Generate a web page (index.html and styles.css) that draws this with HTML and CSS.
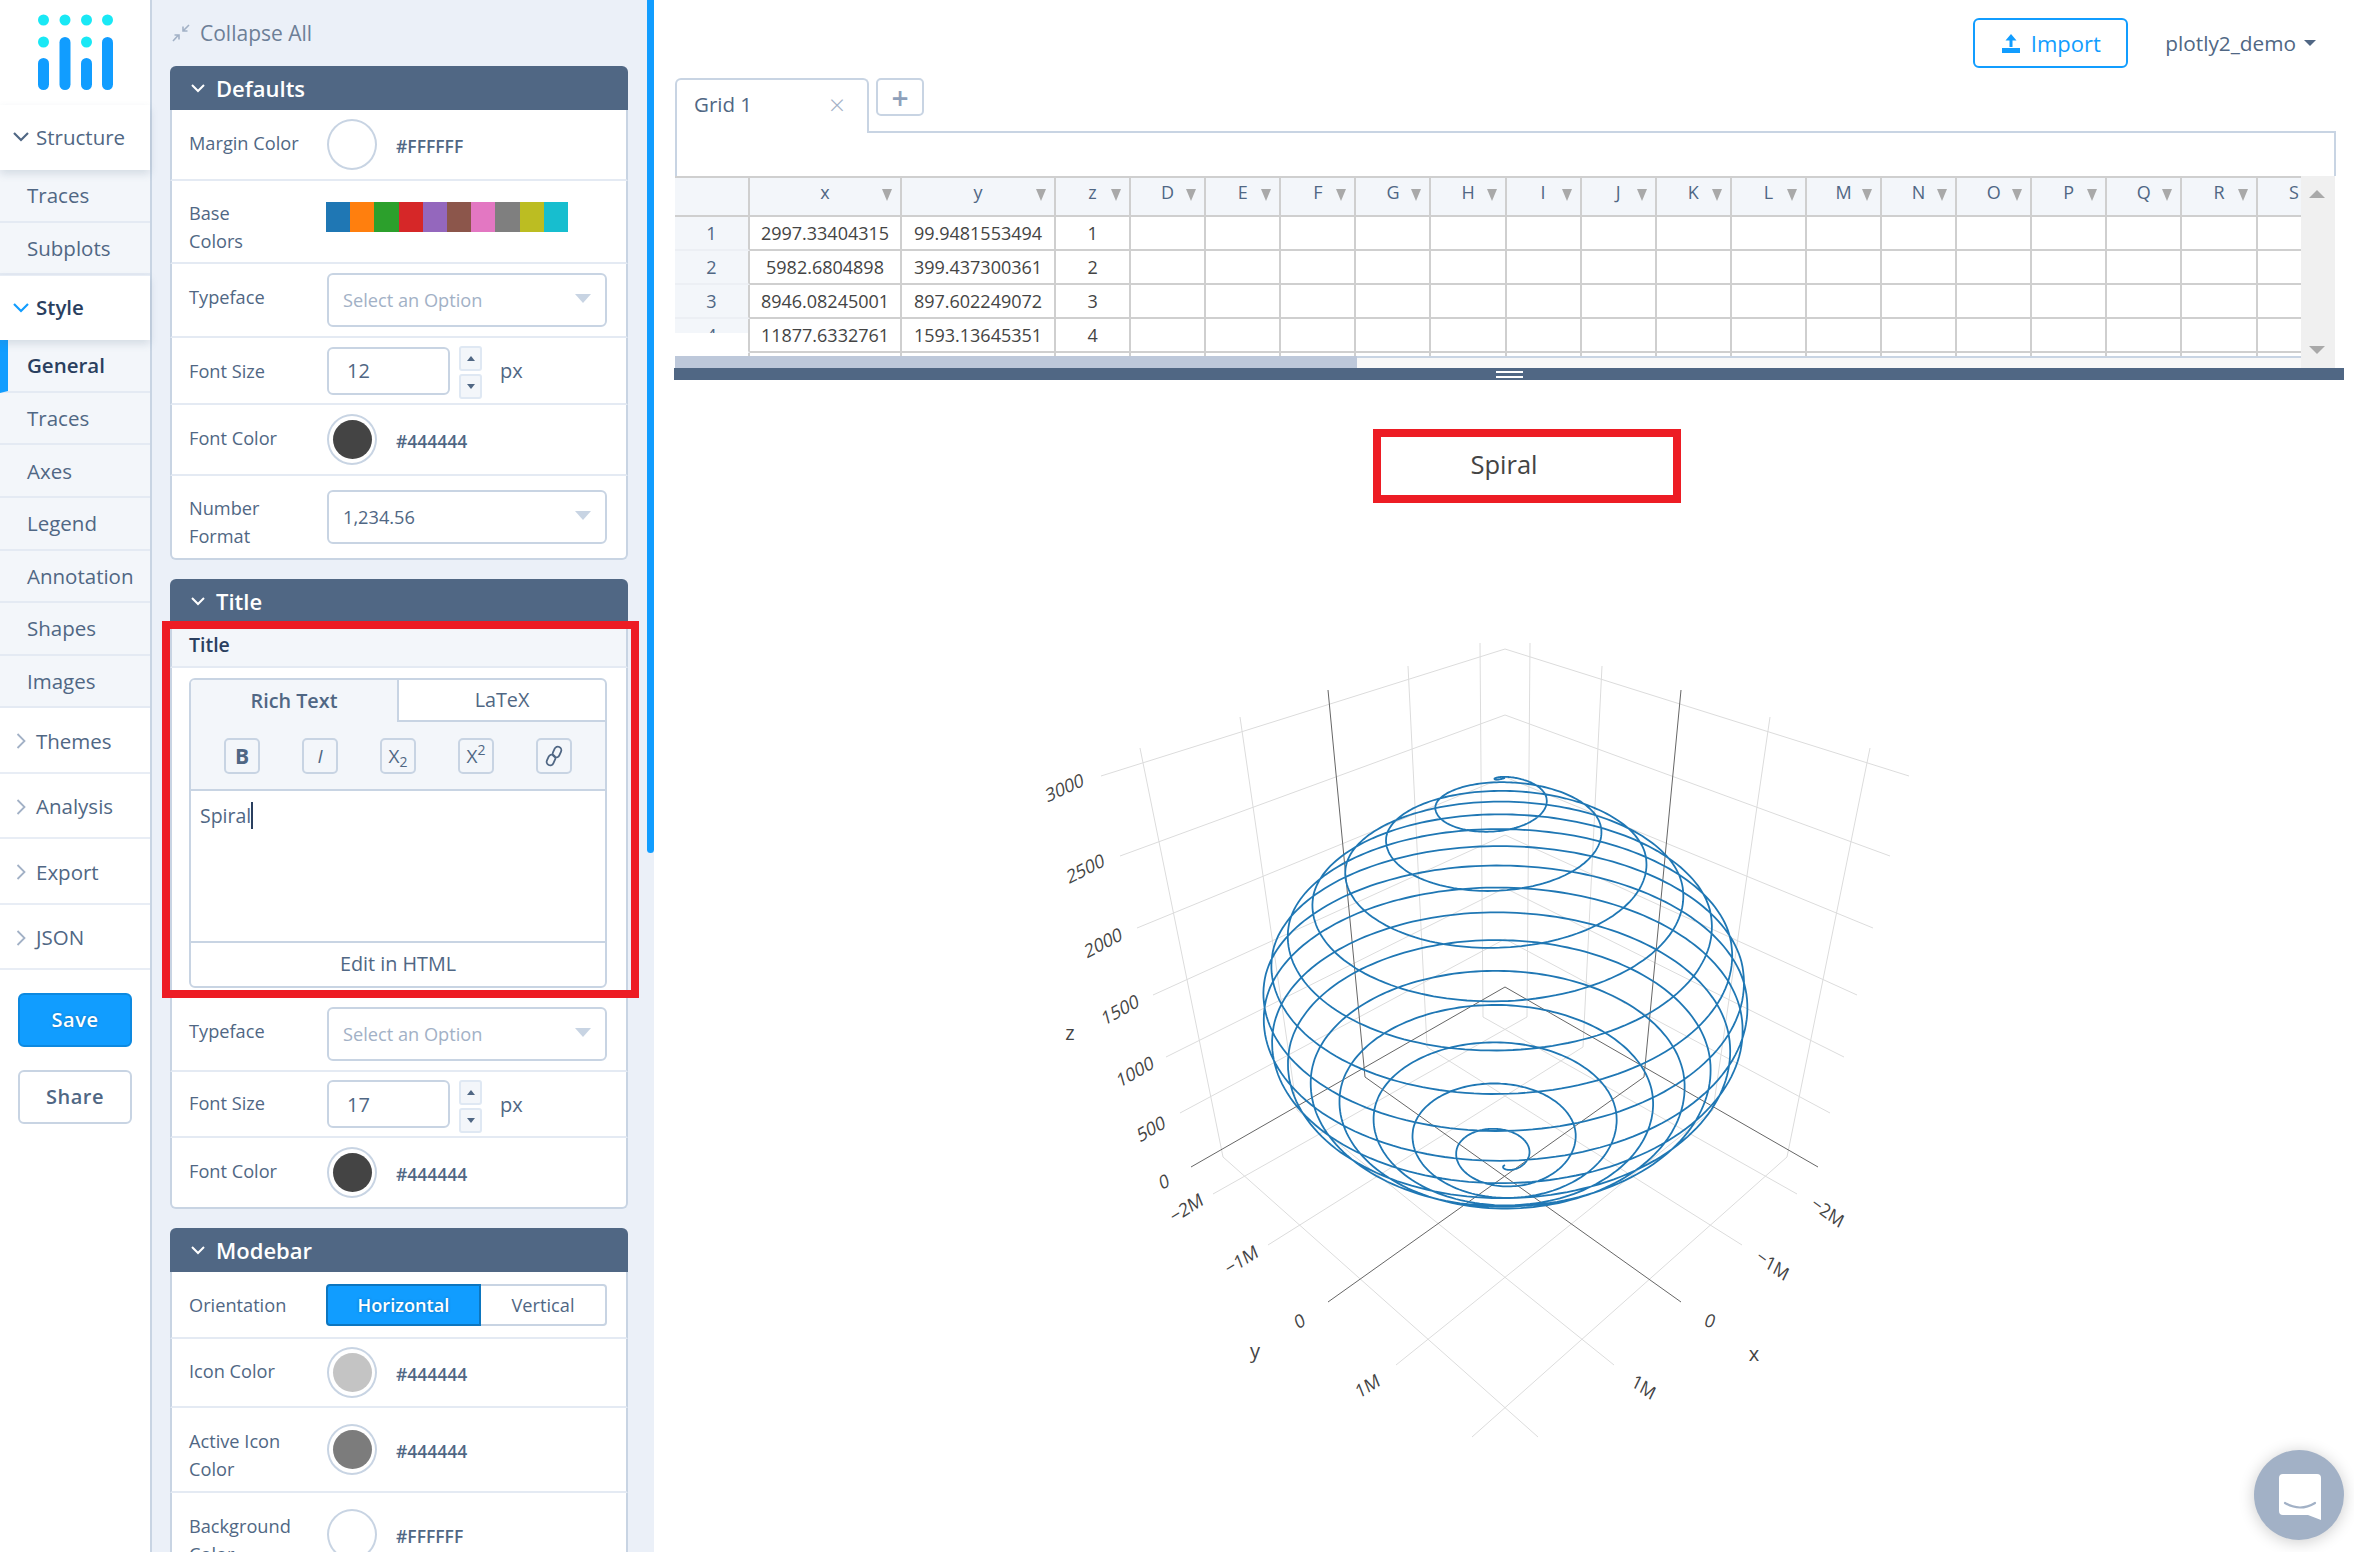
FILE: index.html
```html
<!DOCTYPE html>
<html lang="en">
<head>
    <meta charset="UTF-8">
    <title>Chart Studio</title>
    <link rel="stylesheet" href="styles.css">
</head>
<body>

    <div class="sidebar">
        <div class="logo">
            <svg width="150" height="105" viewBox="0 0 150 105">
                <g fill="#19e8f5">
                    <circle cx="43.5" cy="20" r="5.5"/><circle cx="65" cy="20" r="5.5"/><circle cx="86.5" cy="20" r="5.5"/><circle cx="107.5" cy="20" r="5.5"/>
                    <circle cx="43.5" cy="42" r="5.5"/><circle cx="86.5" cy="42" r="5.5"/>
                </g>
                <g fill="#119dff">
                    <rect x="38" y="58" width="11" height="32" rx="5.5"/><rect x="59.5" y="37" width="11" height="53" rx="5.5"/>
                    <rect x="81" y="58" width="11" height="32" rx="5.5"/><rect x="102" y="37" width="11" height="53" rx="5.5"/>
                </g>
            </svg>
        </div>
        <div class="nav-group open">
            <svg class="chev" viewBox="0 0 16 10"><path d="M1 1l7 7 7-7" fill="none" stroke="#506784" stroke-width="2.2"/></svg>Structure
        </div>
        <div class="nav-item">Traces</div>
        <div class="nav-item">Subplots</div>
        <div class="nav-group open active">
            <svg class="chev" viewBox="0 0 16 10"><path d="M1 1l7 7 7-7" fill="none" stroke="#119dff" stroke-width="2.2"/></svg>Style
        </div>
        <div class="nav-item current">General</div>
        <div class="nav-item">Traces</div>
        <div class="nav-item">Axes</div>
        <div class="nav-item">Legend</div>
        <div class="nav-item">Annotation</div>
        <div class="nav-item">Shapes</div>
        <div class="nav-item">Images</div>
        <div class="nav-group">
            <svg class="chev-r" viewBox="0 0 10 16"><path d="M1.5 1l7 7-7 7" fill="none" stroke="#a2b1c6" stroke-width="1.8"/></svg>Themes
        </div>
        <div class="nav-group">
            <svg class="chev-r" viewBox="0 0 10 16"><path d="M1.5 1l7 7-7 7" fill="none" stroke="#a2b1c6" stroke-width="1.8"/></svg>Analysis
        </div>
        <div class="nav-group">
            <svg class="chev-r" viewBox="0 0 10 16"><path d="M1.5 1l7 7-7 7" fill="none" stroke="#a2b1c6" stroke-width="1.8"/></svg>Export
        </div>
        <div class="nav-group">
            <svg class="chev-r" viewBox="0 0 10 16"><path d="M1.5 1l7 7-7 7" fill="none" stroke="#a2b1c6" stroke-width="1.8"/></svg>JSON
        </div>
        <div class="side-btn save">Save</div>
        <div class="side-btn share">Share</div>
    </div>

    <div class="panels">
        <div class="panel-scroll"></div>
        <div class="collapse-all">
            <svg width="18" height="18" viewBox="0 0 18 18"><g fill="none" stroke="#a2b1c6" stroke-width="1.6"><path d="M17 1l-6 6M11 2.5V7h4.5"/><path d="M1 17l5.5-6M7 15.5V11H2.5"/></g></svg>
            Collapse All
        </div>

        <div class="panel">
            <div class="panel-head">
                <svg class="head-chev" viewBox="0 0 14 9"><path d="M1 1l6 6 6-6" fill="none" stroke="#fff" stroke-width="2"/></svg>Defaults
            </div>
            <div class="row h71">
                <div class="label">Margin Color</div>
                <div class="swatch white"></div><div class="hex">#FFFFFF</div>
            </div>
            <div class="row h83">
                <div class="label low">Base<br>Colors</div>
                <div class="palette">
                    <span class="c1"></span><span class="c2"></span><span class="c3"></span><span class="c4"></span><span class="c5"></span>
                    <span class="c6"></span><span class="c7"></span><span class="c8"></span><span class="c9"></span><span class="c10"></span>
                </div>
            </div>
            <div class="row h74">
                <div class="label">Typeface</div>
                <div class="select placeholder">Select an Option</div>
            </div>
            <div class="row h67">
                <div class="label">Font Size</div>
                <div class="number">12</div>
                <div class="spinner"><span class="up"></span><span class="down"></span></div>
                <div class="unit">px</div>
            </div>
            <div class="row h71">
                <div class="label">Font Color</div>
                <div class="swatch"><i class="dot-dark"></i></div><div class="hex">#444444</div>
            </div>
            <div class="row h82 last">
                <div class="label low">Number<br>Format</div>
                <div class="select">1,234.56</div>
            </div>
        </div>

        <div class="panel">
            <div class="panel-head">
                <svg class="head-chev" viewBox="0 0 14 9"><path d="M1 1l6 6 6-6" fill="none" stroke="#fff" stroke-width="2"/></svg>Title
            </div>
            <div class="sub-head">Title</div>
            <div class="editor-row">
                <div class="editor">
                    <div class="editor-tabs">
                        <div class="editor-tab selected">Rich Text</div>
                        <div class="editor-tab">LaTeX</div>
                    </div>
                    <div class="toolbar">
                        <div class="tool bold">B</div>
                        <div class="tool italic">I</div>
                        <div class="tool">X<sub>2</sub></div>
                        <div class="tool">X<sup>2</sup></div>
                        <div class="tool">
                            <svg width="20" height="22" viewBox="0 0 20 22"><g fill="none" stroke="#506784" stroke-width="1.8"><rect x="9.5" y="1.5" width="7" height="11" rx="3.5" transform="rotate(25 13 7)"/><rect x="3.5" y="9.5" width="7" height="11" rx="3.5" transform="rotate(25 7 15)"/></g></svg>
                        </div>
                    </div>
                    <div class="editor-text"><span class="typed">Spiral</span></div>
                    <div class="editor-foot">Edit in HTML</div>
                </div>
            </div>
            <div class="row h74">
                <div class="label">Typeface</div>
                <div class="select placeholder">Select an Option</div>
            </div>
            <div class="row h66">
                <div class="label">Font Size</div>
                <div class="number">17</div>
                <div class="spinner"><span class="up"></span><span class="down"></span></div>
                <div class="unit">px</div>
            </div>
            <div class="row h71 last">
                <div class="label">Font Color</div>
                <div class="swatch"><i class="dot-dark"></i></div><div class="hex">#444444</div>
            </div>
            <div class="red-box title-mark"></div>
        </div>

        <div class="panel">
            <div class="panel-head">
                <svg class="head-chev" viewBox="0 0 14 9"><path d="M1 1l6 6 6-6" fill="none" stroke="#fff" stroke-width="2"/></svg>Modebar
            </div>
            <div class="row h67">
                <div class="label">Orientation</div>
                <div class="toggle">
                    <div class="toggle-on">Horizontal</div>
                    <div class="toggle-off">Vertical</div>
                </div>
            </div>
            <div class="row h69">
                <div class="label">Icon Color</div>
                <div class="swatch"><i class="dot-light"></i></div><div class="hex">#444444</div>
            </div>
            <div class="row h85">
                <div class="label low">Active Icon<br>Color</div>
                <div class="swatch"><i class="dot-mid"></i></div><div class="hex">#444444</div>
            </div>
            <div class="row h85">
                <div class="label low">Background<br>Color</div>
                <div class="swatch white"></div><div class="hex">#FFFFFF</div>
            </div>
        </div>
    </div>

    <div class="main">
        <div class="topbar">
            <div class="import-btn">
                <svg width="20" height="20" viewBox="0 0 20 20"><path d="M10 1L4.5 7.5h4V14h3V7.5h4zM1 15h18v5H1z" fill="#119dff"/></svg>
                Import
            </div>
            <div class="user">plotly2_demo<span class="user-caret"></span></div>
        </div>

        <div class="grid-wrap">
            <div class="grid-tabs">
                <div class="grid-tab">Grid 1<span class="tab-close">&times;</span></div>
                <div class="grid-add">+</div>
            </div>
            <div class="formula"></div>
            <div class="sheet">
                <div class="sheet-view">
                    <table class="cells">
                        <colgroup><col class="c-head"><col class="c-x"><col class="c-y"><col class="c-std" span="17"></colgroup>
                        <tr class="letters"><th></th><th>x</th><th>y</th><th>z</th><th>D</th><th>E</th><th>F</th><th>G</th><th>H</th><th>I</th><th>J</th><th>K</th><th>L</th><th>M</th><th>N</th><th>O</th><th>P</th><th>Q</th><th>R</th><th>S</th></tr>
                        <tr><td class="num">1</td><td>2997.33404315</td><td>99.9481553494</td><td>1</td><td></td><td></td><td></td><td></td><td></td><td></td><td></td><td></td><td></td><td></td><td></td><td></td><td></td><td></td><td></td><td></td></tr>
                        <tr><td class="num">2</td><td>5982.6804898</td><td>399.437300361</td><td>2</td><td></td><td></td><td></td><td></td><td></td><td></td><td></td><td></td><td></td><td></td><td></td><td></td><td></td><td></td><td></td><td></td></tr>
                        <tr><td class="num">3</td><td>8946.08245001</td><td>897.602249072</td><td>3</td><td></td><td></td><td></td><td></td><td></td><td></td><td></td><td></td><td></td><td></td><td></td><td></td><td></td><td></td><td></td><td></td></tr>
                        <tr><td class="num">4</td><td>11877.6332761</td><td>1593.13645351</td><td>4</td><td></td><td></td><td></td><td></td><td></td><td></td><td></td><td></td><td></td><td></td><td></td><td></td><td></td><td></td><td></td><td></td></tr>
                        <tr><td class="num"></td><td></td><td></td><td></td><td></td><td></td><td></td><td></td><td></td><td></td><td></td><td></td><td></td><td></td><td></td><td></td><td></td><td></td><td></td><td></td></tr>
                    </table>
                    <div class="num-mask"></div>
                </div>
                <div class="hscroll"><div class="hscroll-thumb"></div></div>
                <div class="vscroll"><span class="arrow-up"></span><span class="arrow-down"></span></div>
            </div>
        </div>
        <div class="split-bar"><span class="split-handle"></span></div>

        <div class="plot">
            <svg class="scene" viewBox="674 380 1670 1172" id="scene">
                <g class="grid-lines">
                    <polyline points="1101,776 1505,649 1909,776"/>
                    <polyline points="1120,856 1505,715 1890,856"/>
                    <polyline points="1137,928 1505,777 1873,928"/>
                    <polyline points="1153,995 1505,835 1857,995"/>
                    <polyline points="1166,1057 1505,888 1844,1057"/>
                    <polyline points="1180,1113 1505,939 1830,1113"/>
                    <line x1="1140" y1="748" x2="1223" y2="1157"/>
                    <line x1="1240" y1="717" x2="1297" y2="1110"/>
                    <line x1="1408" y1="666" x2="1427" y2="1047"/>
                    <line x1="1480" y1="643" x2="1483" y2="1017"/>
                    <line x1="1870" y1="748" x2="1787" y2="1157"/>
                    <line x1="1770" y1="717" x2="1713" y2="1110"/>
                    <line x1="1602" y1="666" x2="1583" y2="1047"/>
                    <line x1="1530" y1="643" x2="1527" y2="1017"/>
                    <line x1="1223" y1="1157" x2="1538" y2="1437"/>
                    <line x1="1297" y1="1110" x2="1614" y2="1365"/>
                    <line x1="1427" y1="1047" x2="1742" y2="1245"/>
                    <line x1="1483" y1="1017" x2="1797" y2="1194"/>
                    <line x1="1787" y1="1157" x2="1472" y2="1437"/>
                    <line x1="1713" y1="1110" x2="1396" y2="1365"/>
                    <line x1="1583" y1="1047" x2="1268" y2="1245"/>
                    <line x1="1527" y1="1017" x2="1213" y2="1194"/>
                </g>
                <g class="zero-lines">
                    <polyline points="1191,1167 1505,987 1818,1167"/>
                    <polyline points="1328,690 1365,1077 1681,1302"/>
                    <polyline points="1681,690 1644,1077 1328,1302"/>
                </g>
                <path class="spiral" id="spiral" d=""/>
                <g class="ticks">
                    <text transform="translate(1066 794) rotate(-25) skewX(-14)">3000</text>
                    <text transform="translate(1087 875) rotate(-27) skewX(-14)">2500</text>
                    <text transform="translate(1105 949) rotate(-28) skewX(-14)">2000</text>
                    <text transform="translate(1122 1016) rotate(-29) skewX(-14)">1500</text>
                    <text transform="translate(1137 1078) rotate(-30) skewX(-14)">1000</text>
                    <text transform="translate(1153 1135) rotate(-30) skewX(-14)">500</text>
                    <text transform="translate(1166 1188) rotate(-30) skewX(-14)">0</text>
                    <text transform="translate(1189 1214) rotate(-32) skewX(-10)">−2M</text>
                    <text transform="translate(1244 1266) rotate(-32) skewX(-10)">−1M</text>
                    <text transform="translate(1302 1327) rotate(-32) skewX(-10)">0</text>
                    <text transform="translate(1370 1392) rotate(-32) skewX(-10)">1M</text>
                    <text transform="translate(1825 1218) rotate(36) skewX(10)">−2M</text>
                    <text transform="translate(1770 1271) rotate(36) skewX(10)">−1M</text>
                    <text transform="translate(1708 1327) rotate(8) skewX(-10)">0</text>
                    <text transform="translate(1641 1393) rotate(36) skewX(10)">1M</text>
                    <text class="axis-name" x="1070" y="1040">z</text>
                    <text class="axis-name" x="1255" y="1358">y</text>
                    <text class="axis-name" x="1754" y="1361">x</text>
                </g>
            </svg>
            <div class="red-box plot-title">Spiral</div>
        </div>
    </div>

    <div class="chat-bubble">
        <svg width="44" height="48" viewBox="0 0 44 48"><path d="M5 1h34a4 4 0 0 1 4 4v42l-13-5H5a4 4 0 0 1-4-4V5a4 4 0 0 1 4-4z" fill="#fff"/><path d="M7 30q15 9 30 0" fill="none" stroke="#a2b1c6" stroke-width="2.2" stroke-linecap="round"/></svg>
    </div>

    <script src="chart.js"></script>
</body>
</html>
```

FILE: styles.css
```css
* {
    box-sizing: border-box;
}

html, body {
    height: 100%;
}

body {
    margin: 0;
    display: flex;
    overflow: hidden;
    background-color: #fff;
    color: #506784;
    font-family: "Open Sans", "Liberation Sans", sans-serif;
    font-size: 18px;
}

/* left nav */
.sidebar {
    width: 152px;
    flex: none;
    border-right: 2px solid #c8d4e3;
    background-color: #fff;
}

.logo {
    height: 105px;
}

.logo svg {
    display: block;
}

.nav-group {
    height: 65.4px;
    display: flex;
    align-items: center;
    padding: 2px 0 0 36px;
    position: relative;
    font-size: 20.5px;
    background-color: #fff;
    border-bottom: 2px solid #e8edf5;
}

.nav-group.open {
    height: 65px;
    padding-top: 0;
    padding-bottom: 2px;
    border-bottom: none;
    box-shadow: 0 4px 8px rgba(80, 103, 132, 0.18);
    z-index: 1;
}

.nav-group.active {
    color: #2a3f5f;
    font-weight: 600;
    border-top: 1px solid #e8edf5;
}

.chev {
    position: absolute;
    left: 13px;
    top: 27px;
    width: 16px;
    height: 10px;
}

.chev-r {
    position: absolute;
    left: 16px;
    top: 25px;
    width: 10px;
    height: 16px;
}

.nav-item {
    height: 52.6px;
    display: flex;
    align-items: center;
    padding-left: 27px;
    font-size: 20.5px;
    background-color: #f3f6fa;
    border-bottom: 2px solid #e4eaf3;
}

.nav-item.current {
    color: #2a3f5f;
    font-weight: 600;
    border-left: 8px solid #119dff;
    padding-left: 19px;
}

.side-btn {
    width: 114px;
    height: 54px;
    margin-left: 18px;
    display: flex;
    align-items: center;
    justify-content: center;
    border-radius: 6px;
    font-size: 20px;
    font-weight: 600;
    letter-spacing: 0.5px;
}

.save {
    margin-top: 23px;
    background-color: #119dff;
    border: 2px solid #0d89e0;
    color: #fff;
    text-shadow: 0 0 3px rgba(0, 0, 0, 0.3);
}

.share {
    margin-top: 23px;
    background-color: #fff;
    border: 2px solid #c8d4e3;
}

/* control panels */
.panels {
    width: 502px;
    flex: none;
    height: 100%;
    overflow: hidden;
    position: relative;
    padding-left: 18px;
    background-color: #ebf0f8;
}

.panel-scroll {
    position: absolute;
    right: 0;
    top: 0;
    width: 7px;
    height: 853px;
    border-radius: 0 0 4px 4px;
    background-color: #119dff;
}

.collapse-all {
    height: 66px;
    display: flex;
    align-items: center;
    gap: 10px;
    padding: 0 0 0 2px;
    font-size: 21px;
    color: #6d7f97;
}

.panel {
    width: 458px;
    margin-bottom: 19px;
    position: relative;
}

.panel-head {
    height: 44px;
    display: flex;
    align-items: center;
    padding-left: 21px;
    gap: 11px;
    border-radius: 6px 6px 0 0;
    background-color: #506784;
    color: #fff;
    font-size: 22px;
    font-weight: 600;
}

.head-chev {
    width: 14px;
    height: 9px;
}

.row {
    display: flex;
    align-items: center;
    padding-left: 17px;
    background-color: #fff;
    border-left: 2px solid #c8d4e3;
    border-right: 2px solid #c8d4e3;
    border-bottom: 2px solid #e4eaf3;
}

.row.last {
    border-bottom: 2px solid #c8d4e3;
    border-radius: 0 0 6px 6px;
}

.h66 { height: 66px; }
.h67 { height: 67px; }
.h69 { height: 69px; }
.h71 { height: 71px; }
.h74 { height: 74px; }
.h82 { height: 84px; }
.h83 { height: 83px; }
.h85 { height: 85px; }

.label {
    width: 138px;
    flex: none;
    line-height: 28px;
    font-size: 18.2px;
    margin-top: -3px;
}

.label.low {
    margin-top: 10px;
}

.h74 .label {
    margin-top: -6px;
}

.h67 .label {
    margin-top: 0;
}

.swatch {
    width: 50px;
    height: 51px;
    flex: none;
    display: flex;
    align-items: center;
    justify-content: center;
    border: 2px solid #c8d4e3;
    border-radius: 50%;
    background-color: #fff;
}

.swatch i {
    width: 39px;
    height: 39px;
    border-radius: 50%;
}

.dot-dark { background-color: #444; }
.dot-light { background-color: #c4c4c4; }
.dot-mid { background-color: #7c7c7c; }

.hex {
    margin-left: 19px;
    font-weight: 600;
    font-size: 17.5px;
    padding-top: 2px;
}

.palette {
    display: flex;
    margin: -10px 0 0 -1px;
}

.palette span {
    width: 24.2px;
    height: 30px;
}

.c1 { background-color: #1f77b4; }
.c2 { background-color: #ff7f0e; }
.c3 { background-color: #2ca02c; }
.c4 { background-color: #d62728; }
.c5 { background-color: #9467bd; }
.c6 { background-color: #8c564b; }
.c7 { background-color: #e377c2; }
.c8 { background-color: #7f7f7f; }
.c9 { background-color: #bcbd22; }
.c10 { background-color: #17becf; }

.select {
    width: 280px;
    height: 54px;
    display: flex;
    align-items: center;
    padding-left: 14px;
    position: relative;
    border: 2px solid #c8d4e3;
    border-radius: 6px;
    background-color: #fff;
    font-size: 18.2px;
}

.select.placeholder {
    color: #a2b1c6;
}

.select::after {
    content: "";
    position: absolute;
    right: 14px;
    top: 19px;
    border-left: 8px solid transparent;
    border-right: 8px solid transparent;
    border-top: 9px solid #c8d4e3;
}

.number {
    width: 123px;
    height: 48px;
    display: flex;
    align-items: center;
    padding-left: 18px;
    border: 2px solid #c8d4e3;
    border-radius: 6px;
    font-size: 20px;
}

.spinner {
    width: 23px;
    margin: 4px 0 0 9px;
    display: flex;
    flex-direction: column;
    gap: 3px;
}

.spinner span {
    height: 25px;
    display: flex;
    align-items: center;
    justify-content: center;
    border: 2px solid #dfe8f3;
    border-radius: 3px;
    background-color: #f3f6fa;
}

.spinner .up::before {
    content: "";
    border-left: 4px solid transparent;
    border-right: 4px solid transparent;
    border-bottom: 5px solid #506784;
}

.spinner .down::before {
    content: "";
    border-left: 4px solid transparent;
    border-right: 4px solid transparent;
    border-top: 5px solid #506784;
}

.unit {
    margin-left: 18px;
    font-size: 20px;
}

.sub-head {
    height: 45px;
    display: flex;
    align-items: center;
    padding-left: 17px;
    background-color: #f3f6fa;
    border-left: 2px solid #c8d4e3;
    border-right: 2px solid #c8d4e3;
    border-bottom: 2px solid #e4eaf3;
    color: #2a3f5f;
    font-size: 19.5px;
    font-weight: 600;
}

.editor-row {
    height: 330px;
    padding: 10px 19px 0 17px;
    background-color: #fff;
    border-left: 2px solid #c8d4e3;
    border-right: 2px solid #c8d4e3;
    border-bottom: 2px solid #e4eaf3;
}

.editor {
    height: 310px;
    display: flex;
    flex-direction: column;
    border: 2px solid #c8d4e3;
    border-radius: 6px;
    overflow: hidden;
}

.editor-tabs {
    height: 42px;
    flex: none;
    display: flex;
}

.editor-tab {
    flex: 1;
    display: flex;
    align-items: center;
    justify-content: center;
    padding-bottom: 2px;
    font-size: 19.8px;
    border-left: 2px solid #c8d4e3;
    border-bottom: 2px solid #c8d4e3;
}

.editor-tab.selected {
    font-weight: 600;
    border: none;
    background-color: #f3f6fa;
}

.toolbar {
    height: 69px;
    flex: none;
    display: flex;
    align-items: center;
    gap: 42px;
    padding: 1px 0 0 33px;
    background-color: #f3f6fa;
    border-bottom: 2px solid #c8d4e3;
}

.tool {
    width: 36px;
    height: 36px;
    flex: none;
    display: flex;
    align-items: center;
    justify-content: center;
    border: 2px solid #c8d4e3;
    border-radius: 5px;
    font-size: 19px;
    line-height: 1;
}

.tool sub, .tool sup {
    font-size: 14px;
    line-height: 0;
}

.tool sub {
    margin-top: 12px;
}

.tool sup {
    margin-top: -12px;
}

.tool.bold {
    font-weight: 700;
    font-size: 21px;
}

.tool.italic {
    font-style: italic;
}

.editor-text {
    flex: 1;
    padding: 11px 0 0 9px;
    font-size: 19.5px;
}

.typed {
    border-right: 2px solid #2a3f5f;
    display: inline-block;
    line-height: 27px;
}

.editor-foot {
    height: 45px;
    flex: none;
    display: flex;
    align-items: center;
    justify-content: center;
    padding-bottom: 2px;
    border-top: 2px solid #c8d4e3;
    font-size: 19.8px;
}

.toggle {
    width: 281px;
    height: 42px;
    margin-left: -1px;
    display: flex;
    font-size: 18.2px;
}

.toggle-on {
    width: 155px;
    display: flex;
    align-items: center;
    justify-content: center;
    background-color: #119dff;
    border: 2px solid #0d76bf;
    border-radius: 4px 0 0 4px;
    color: #fff;
    font-weight: 600;
    text-shadow: 0 0 3px rgba(0, 0, 0, 0.3);
}

.toggle-off {
    flex: 1;
    display: flex;
    align-items: center;
    justify-content: center;
    border: 2px solid #c8d4e3;
    border-left: none;
    border-radius: 0 4px 4px 0;
}

.red-box {
    position: absolute;
    border: 8px solid #ed1c24;
}

.title-mark {
    left: -8px;
    top: 42px;
    width: 477px;
    height: 377px;
}

/* grid + plot */
.main {
    width: 1690px;
    flex: none;
    padding-left: 20px;
    display: flex;
    flex-direction: column;
    height: 100%;
}

.topbar {
    height: 78px;
    flex: none;
    display: flex;
    justify-content: flex-end;
    align-items: flex-start;
    gap: 37px;
    padding: 18px 28px 0 0;
}

.import-btn {
    width: 155px;
    height: 50px;
    display: flex;
    align-items: center;
    justify-content: center;
    gap: 10px;
    border: 2px solid #119dff;
    border-radius: 6px;
    color: #119dff;
    font-size: 22px;
}

.user {
    height: 50px;
    display: flex;
    align-items: center;
    font-size: 20.8px;
}

.user-caret {
    margin-left: 8px;
    border-left: 6px solid transparent;
    border-right: 6px solid transparent;
    border-top: 6px solid #506784;
}

.grid-wrap {
    width: 1661px;
    margin-left: 1px;
    flex: none;
}

.grid-tabs {
    height: 55px;
    display: flex;
    align-items: flex-start;
    gap: 7px;
    border-bottom: 2px solid #c8d4e3;
}

.grid-tab {
    width: 194px;
    height: 55px;
    display: flex;
    align-items: center;
    justify-content: space-between;
    padding: 0 22px 6px 17px;
    background-color: #fff;
    border: 2px solid #c8d4e3;
    border-bottom: none;
    border-radius: 6px 6px 0 0;
    font-size: 20.5px;
}

.tab-close {
    color: #a2b1c6;
    font-size: 28px;
    font-weight: 300;
    line-height: 1;
}

.grid-add {
    width: 48px;
    height: 38px;
    display: flex;
    align-items: center;
    justify-content: center;
    border: 2px solid #c8d4e3;
    border-radius: 5px;
    color: #8ea0ba;
    font-size: 30px;
    font-weight: 600;
}

.formula {
    height: 43px;
    border-left: 2px solid #c8d4e3;
    border-right: 2px solid #c8d4e3;
}

.sheet {
    height: 192px;
    position: relative;
    display: flex;
    flex-wrap: wrap;
}

.sheet-view {
    width: 1626px;
    height: 180px;
    overflow: hidden;
    position: relative;
}

.cells {
    table-layout: fixed;
    width: 1626px;
    border-collapse: separate;
    border-spacing: 0;
    border-top: 2px solid #cfcfcf;
    color: #444;
    font-size: 18px;
}

.c-head { width: 75px; }
.c-x { width: 152px; }
.c-y { width: 154px; }
.c-std { width: 75.1px; }

.cells th, .cells td {
    height: 34px;
    padding: 0;
    overflow: hidden;
    white-space: nowrap;
    text-align: center;
    font-weight: 400;
    border-right: 2px solid #cfcfcf;
    border-bottom: 2px solid #cfcfcf;
}

.cells .letters th {
    height: 39px;
    position: relative;
    padding-bottom: 9px;
    background-color: #f3f6fa;
    color: #506784;
}

.cells .letters th:not(:first-child)::after {
    content: "";
    position: absolute;
    right: 8px;
    top: 11px;
    border-left: 5px solid transparent;
    border-right: 5px solid transparent;
    border-top: 12px solid #a9a9a9;
}

.cells .num {
    background-color: #f3f6fa;
    color: #506784;
    border-bottom-color: #eceff4;
}

.num-mask {
    position: absolute;
    left: 0;
    top: 157px;
    width: 73px;
    height: 23px;
    background-color: #fff;
}

.hscroll {
    width: 1626px;
    height: 12px;
    background-color: #f8f8f8;
    border-top: 2px solid #c8d4e3;
}

.hscroll-thumb {
    width: 682px;
    height: 12px;
    margin-top: -2px;
    background-color: #bdc8da;
}

.vscroll {
    position: absolute;
    left: 1626px;
    top: 0;
    width: 34px;
    height: 192px;
    background-color: #f0f0f0;
}

.arrow-up {
    position: absolute;
    left: 8px;
    top: 14px;
    border-left: 8.5px solid transparent;
    border-right: 8.5px solid transparent;
    border-bottom: 8px solid #a9a9a9;
}

.arrow-down {
    position: absolute;
    left: 8px;
    top: 170px;
    border-left: 8.5px solid transparent;
    border-right: 8.5px solid transparent;
    border-top: 8px solid #a9a9a9;
}

.split-bar {
    height: 12px;
    flex: none;
    display: flex;
    justify-content: center;
    align-items: center;
    background-color: #506784;
}

.split-handle {
    width: 27px;
    height: 7px;
    border-top: 2px solid #fff;
    border-bottom: 2px solid #fff;
}

.plot {
    flex: 1;
    position: relative;
}

.scene {
    position: absolute;
    left: 0;
    top: 0;
    width: 1670px;
    height: 1172px;
}

.grid-lines polyline, .grid-lines line {
    fill: none;
    stroke: #dcdcdc;
    stroke-width: 1;
}

.zero-lines polyline {
    fill: none;
    stroke: #666;
    stroke-width: 1;
}

.spiral {
    fill: none;
    stroke: #1f77b4;
    stroke-width: 1.8;
}

.ticks text {
    fill: #444;
    font-size: 18px;
    text-anchor: middle;
}

.ticks .axis-name {
    font-size: 20px;
}

.plot-title {
    left: 699px;
    top: 49px;
    width: 308px;
    height: 74px;
    display: flex;
    align-items: center;
    justify-content: center;
    padding: 0 46px 5px 0;
    color: #444;
    font-size: 25.5px;
}

.chat-bubble {
    position: absolute;
    left: 2254px;
    top: 1450px;
    width: 90px;
    height: 90px;
    display: flex;
    align-items: center;
    justify-content: center;
    padding: 3px 0 0 2px;
    border-radius: 50%;
    background-color: #a2b1c6;
    box-shadow: 0 2px 16px rgba(0, 0, 0, 0.2);
}
```

FILE: chart.js
```js
// Draws the spiral trace: a sphere wound 16 times, seen through a simple perspective
function project(x, y, z) {
    const u = (y - x) / Math.SQRT2;
    const w = -(x + y) / Math.SQRT2;
    const den = 1 + 0.13 * w - 0.225 * z;
    // the front half of each ring drops a little further than the back half rises
    const tilt = w < 0 ? -150 : -140;
    return [1505 + 212 * u / den, 1165 + (tilt * w - 300 * z) / den];
}

const points = [];
for (let i = 0; i <= 3000; i++) {
    const t = i / 3000;
    const r = Math.pow(Math.sin(Math.PI * t), 0.85);
    const a = 100 * t;
    const p = project(r * Math.cos(a), r * Math.sin(a), t);
    points.push(p[0].toFixed(1) + ' ' + p[1].toFixed(1));
}
document.getElementById('spiral').setAttribute('d', 'M' + points.join('L'));
```
